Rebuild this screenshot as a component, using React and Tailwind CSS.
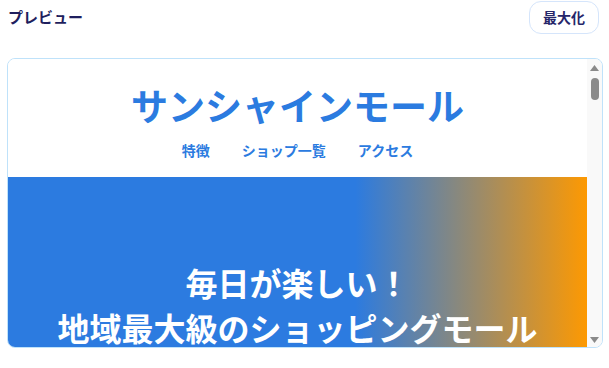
const jp = { fontFamily: '"Noto Sans CJK JP", "Noto Sans", sans-serif' };

function FakeScrollbar() {
  return (
    <div className="w-[15px] shrink-0 bg-[#f9f9f9] flex flex-col items-center">
      {/* up arrow */}
      <svg width="9" height="6" viewBox="0 0 9 6" className="mt-[6px]">
        <polygon points="4.5,0 9,6 0,6" fill="#8a8a8a" />
      </svg>
      <div className="w-[8px] h-[22px] mt-[7px] rounded-full bg-[#8b8b8b]" />
      <div className="flex-1" />
      {/* down arrow */}
      <svg width="9" height="6" viewBox="0 0 9 6" className="mb-[4px]">
        <polygon points="0,0 9,0 4.5,6" fill="#8a8a8a" />
      </svg>
    </div>
  );
}

export default function App() {
  return (
    <div className="w-[609px] h-[368px] bg-white overflow-hidden" style={jp}>
      {/* top bar */}
      <div className="flex items-center justify-between pl-2 pr-[10px] pt-px">
        <h2 className="text-[15px] font-bold text-[#1f1f5e]">プレビュー</h2>
        <button className="h-[33px] px-[13px] rounded-xl border border-[#d5e5fb] bg-white text-[14px] font-bold text-[#26266a]">
          最大化
        </button>
      </div>

      {/* preview frame */}
      <div className="mt-[24px] ml-[7px] w-[596px] h-[290px] border border-[#bfe2fa] rounded-lg overflow-hidden flex">
        <div className="flex-1 overflow-hidden">
          <header className="bg-white pt-[24px] pb-[17px] text-center">
            <h1 className="text-[37px] leading-[1.24] font-bold text-[#2b7be0]">
              サンシャインモール
            </h1>
            <nav className="mt-[11px] flex justify-center gap-8 text-[14px] leading-5 font-semibold text-[#2b7be0]">
              <span>特徴</span>
              <span>ショップ一覧</span>
              <span>アクセス</span>
            </nav>
          </header>
          <section className="bg-[linear-gradient(90deg,#2c7be0_60%,#fd9902)] pt-[83px] pb-20 text-center text-white">
            <p className="text-[32px] leading-[1.4] font-bold">
              毎日が楽しい！
              <br />
              地域最大級のショッピングモール
            </p>
          </section>
        </div>
        <FakeScrollbar />
      </div>
    </div>
  );
}
